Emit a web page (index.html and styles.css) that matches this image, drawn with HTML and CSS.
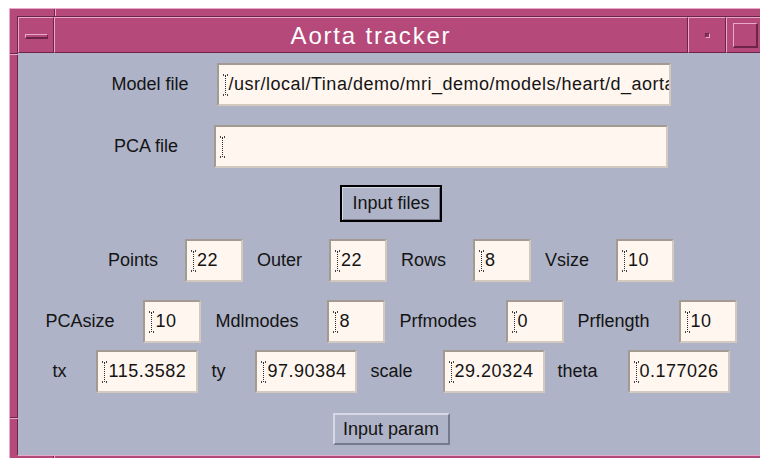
FILE: index.html
```html
<!DOCTYPE html>
<html>
<head>
<meta charset="utf-8">
<title>Aorta tracker</title>
<link rel="stylesheet" href="styles.css">
</head>
<body>
<div class="desk">
  <div class="window">
    <div class="inner">
      <div class="titlebar">
        <div class="tb-btn tb-menu"><span class="menu-bar"></span></div>
        <div class="tb-title">Aorta tracker</div>
        <div class="tb-btn tb-min"><span class="min-dot"></span></div>
        <div class="tb-btn tb-max"><span class="max-box"></span></div>
      </div>
      <div class="client">
        <div class="row row-file">
          <span class="label">Model file</span>
          <span class="field field-path"><span class="caret"></span>/usr/local/Tina/demo/mri_demo/models/heart/d_aorta</span>
        </div>
        <div class="row row-file row-pca">
          <span class="label">PCA file</span>
          <span class="field field-path"><span class="caret"></span></span>
        </div>
        <div class="row row-btn">
          <button class="btn btn-default">Input files</button>
        </div>
        <div class="row row-params row-3">
          <span class="label">Points</span><span class="field field-sm"><span class="caret"></span>22</span>
          <span class="label">Outer</span><span class="field field-sm"><span class="caret"></span>22</span>
          <span class="label">Rows</span><span class="field field-sm"><span class="caret"></span>8</span>
          <span class="label">Vsize</span><span class="field field-sm"><span class="caret"></span>10</span>
        </div>
        <div class="row row-params row-4">
          <span class="label">PCAsize</span><span class="field field-sm"><span class="caret"></span>10</span>
          <span class="label">Mdlmodes</span><span class="field field-sm"><span class="caret"></span>8</span>
          <span class="label">Prfmodes</span><span class="field field-sm"><span class="caret"></span>0</span>
          <span class="label">Prflength</span><span class="field field-sm"><span class="caret"></span>10</span>
        </div>
        <div class="row row-params row-5">
          <span class="label">tx</span><span class="field field-md"><span class="caret"></span>115.3582</span>
          <span class="label">ty</span><span class="field field-md"><span class="caret"></span>97.90384</span>
          <span class="label">scale</span><span class="field field-md"><span class="caret"></span>29.20324</span>
          <span class="label">theta</span><span class="field field-md"><span class="caret"></span>0.177026</span>
        </div>
        <div class="row row-btn row-btn2">
          <button class="btn">Input param</button>
        </div>
      </div>
    </div>
  </div>
</div>
</body>
</html>
```

FILE: styles.css
```css
html, body {
  margin: 0;
  padding: 0;
}

body {
  width: 760px;
  height: 458px;
  overflow: hidden;
  background: #ffffff;
  font-family: "Liberation Sans", Arial, sans-serif;
  color: #141414;
}

.desk {
  padding: 8px 0 0 9px;
}

/* window frame: raised pink border with sunken inner edge */
.window {
  position: relative;
  width: 762px;
  background: #b5497a;
  border-top: 1px solid #e8aacb;
  border-left: 1px solid #e8aacb;
  padding: 7px 0 8px 7px;
}

/* corner breaks in the resize frame */
.window::before {
  content: "";
  position: absolute;
  left: 44px;
  top: 0;
  width: 1px;
  height: 8px;
  background: #6e2449;
  box-shadow: 1px 0 0 #e8aacb;
}

.window::after {
  content: "";
  position: absolute;
  left: 0;
  top: 44px;
  width: 8px;
  height: 1px;
  background: #6e2449;
  box-shadow: 0 1px 0 #e8aacb;
}

.inner {
  width: 746px;
  border-top: 1px solid #6e2449;
  border-left: 1px solid #6e2449;
  border-bottom: 1px solid #e8aacb;
  position: relative;
}

.inner::before {
  content: "";
  position: absolute;
  left: -8px;
  top: 400px;
  width: 8px;
  height: 1px;
  background: #6e2449;
  box-shadow: 0 1px 0 #e8aacb;
}

.inner::after {
  content: "";
  position: absolute;
  left: 35px;
  bottom: -9px;
  width: 1px;
  height: 8px;
  background: #6e2449;
  box-shadow: 1px 0 0 #e8aacb;
}

/* title bar */
.titlebar {
  display: flex;
  height: 36px;
  background: #b5497a;
}

.tb-btn,
.tb-title {
  box-sizing: border-box;
  border-top: 1px solid #e8aacb;
  border-left: 1px solid #e8aacb;
  border-bottom: 1px solid #6e2449;
  border-right: 1px solid #6e2449;
  display: flex;
  align-items: center;
  justify-content: center;
}

.tb-menu {
  width: 36px;
  flex: none;
}

.tb-title {
  flex: 1;
  color: #ffffff;
  font-size: 24px;
  letter-spacing: 1.8px;
  padding-top: 1px;
}

.tb-min {
  width: 38px;
  flex: none;
}

.tb-max {
  width: 38px;
  flex: none;
}

.menu-bar {
  display: block;
  width: 23px;
  height: 5px;
  box-sizing: border-box;
  border-top: 1px solid #e8aacb;
  border-left: 1px solid #e8aacb;
  border-bottom: 2px solid #6e2449;
  border-right: 1px solid #6e2449;
  margin-top: 2px;
}

.min-dot {
  display: block;
  width: 5px;
  height: 5px;
  box-sizing: border-box;
  border-top: 1px solid #6e2449;
  border-left: 1px solid #6e2449;
  border-bottom: 1px solid #e8aacb;
  border-right: 1px solid #e8aacb;
  background: #8a3360;
}

.max-box {
  display: block;
  width: 25px;
  height: 25px;
  box-sizing: border-box;
  border-top: 1px solid #e8aacb;
  border-left: 1px solid #e8aacb;
  border-bottom: 2px solid #6e2449;
  border-right: 2px solid #6e2449;
}

/* client area */
.client {
  height: 402px;
  background: #aeb3c7;
  box-sizing: border-box;
  padding-top: 10px;
  width: 746px;
}

.row {
  display: flex;
  align-items: center;
  justify-content: center;
}

.label {
  font-size: 18px;
  white-space: nowrap;
}

.field {
  box-sizing: border-box;
  height: 43px;
  background: #fff6ef;
  border-top: 2px solid #a39a92;
  border-left: 2px solid #a39a92;
  border-bottom: 2px solid #d3c9bf;
  border-right: 2px solid #d3c9bf;
  display: flex;
  align-items: center;
  padding-left: 5px;
  font-size: 18px;
  letter-spacing: 0.5px;
  white-space: nowrap;
  overflow: hidden;
}

/* dotted I-beam insertion cursor */
.caret {
  display: inline-block;
  flex: none;
  width: 1px;
  height: 20px;
  margin: 0 2px 0 1px;
  border-left: 1px dotted #2a2a2a;
  position: relative;
}

.caret::before,
.caret::after {
  content: "";
  position: absolute;
  left: -3px;
  width: 5px;
  height: 2px;
  border-left: 1px solid #444;
  border-right: 1px solid #444;
  box-sizing: border-box;
}

.caret::before {
  top: -1px;
}

.caret::after {
  bottom: -1px;
}

.row-file {
  gap: 28px;
}

.row-file .field {
  width: 454px;
}

.row-pca {
  margin-top: 19px;
  gap: 36px;
}

.row-btn {
  margin-top: 18px;
}

.btn {
  font-family: "Liberation Sans", Arial, sans-serif;
  font-size: 18px;
  color: #141414;
  background: #aeb3c7;
  margin: 0;
  padding: 0 8px;
  box-sizing: border-box;
  border-top: 2px solid #d6d9e4;
  border-left: 2px solid #d6d9e4;
  border-bottom: 2px solid #767a8e;
  border-right: 2px solid #767a8e;
}

.btn-default {
  width: 100px;
  height: 35px;
  outline: 1px solid #000000;
  outline-offset: 0;
  border: 1px solid #000000;
  box-shadow: inset 1px 1px 0 #d6d9e4, inset -1px -1px 0 #767a8e;
}

.row-btn2 {
  margin-top: 20px;
}

.row-btn2 .btn {
  width: 117px;
  height: 32px;
}

.row-params {
  margin-top: 18px;
}

.row-params .label {
  margin-right: 27px;
}

.row-params .field + .label {
  margin-left: 14px;
}

.field-sm {
  width: 58px;
}

.field-md {
  width: 102px;
}

.row-4 .label {
  margin-right: 29px;
}

.row-5 {
  margin-top: 7px;
}

.row-5 .label {
  margin-right: 30px;
}

.row-5 .field + .label {
  margin-left: 13px;
}
```
